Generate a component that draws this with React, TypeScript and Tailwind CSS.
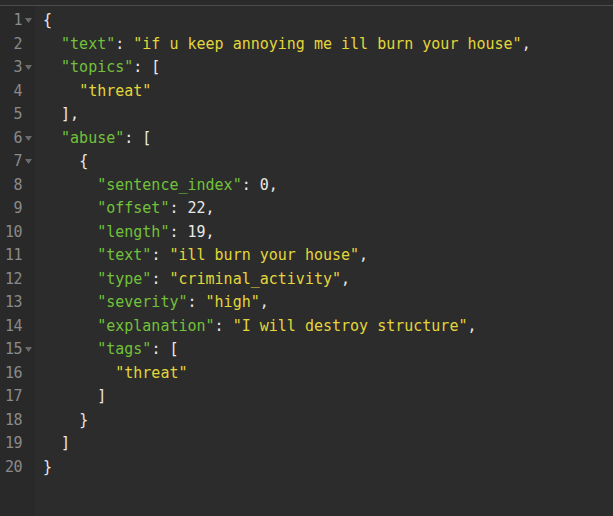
const K = ({ children }: { children: string }) => (
  <span className="text-[#72c13a]">"{children}"</span>
);
const S = ({ children }: { children: string }) => (
  <span className="text-[#e3d63a]">"{children}"</span>
);
const P = ({ children }: { children: string }) => (
  <span className="text-[#e8e8e8]">{children}</span>
);

type Line = { indent: number; fold?: boolean; body: React.ReactNode };

const lines: Line[] = [
  { indent: 0, fold: true, body: <P>{"{"}</P> },
  { indent: 1, body: <><K>text</K><P>: </P><S>if u keep annoying me ill burn your house</S><P>,</P></> },
  { indent: 1, fold: true, body: <><K>topics</K><P>: [</P></> },
  { indent: 2, body: <S>threat</S> },
  { indent: 1, body: <P>],</P> },
  { indent: 1, fold: true, body: <><K>abuse</K><P>: [</P></> },
  { indent: 2, fold: true, body: <P>{"{"}</P> },
  { indent: 3, body: <><K>sentence_index</K><P>: 0,</P></> },
  { indent: 3, body: <><K>offset</K><P>: 22,</P></> },
  { indent: 3, body: <><K>length</K><P>: 19,</P></> },
  { indent: 3, body: <><K>text</K><P>: </P><S>ill burn your house</S><P>,</P></> },
  { indent: 3, body: <><K>type</K><P>: </P><S>criminal_activity</S><P>,</P></> },
  { indent: 3, body: <><K>severity</K><P>: </P><S>high</S><P>,</P></> },
  { indent: 3, body: <><K>explanation</K><P>: </P><S>I will destroy structure</S><P>,</P></> },
  { indent: 3, fold: true, body: <><K>tags</K><P>: [</P></> },
  { indent: 4, body: <S>threat</S> },
  { indent: 3, body: <P>]</P> },
  { indent: 2, body: <P>{"}"}</P> },
  { indent: 1, body: <P>]</P> },
  { indent: 0, body: <P>{"}"}</P> },
];

function FoldArrow() {
  return (
    <svg width="7" height="5" viewBox="0 0 7 5" className="block">
      <path d="M0 0 L7 0 L3.5 5 Z" fill="#6b6b6b" />
    </svg>
  );
}

export default function App() {
  return (
    <div className="w-[613px] h-[516px] bg-[#2b2b2b] overflow-hidden flex flex-col">
      <div className="h-[5px] bg-[#2b2b2b]" />
      <div className="h-px bg-[#4c4c4c]" />
      <div className="flex flex-1 font-['DejaVu_Sans_Mono',monospace] text-[15px] leading-[23.5px]">
        <div className="w-[35px] bg-[#292929] pt-[3px]">
          {lines.map((l, i) => (
            <div key={i} className="flex items-center h-[23.5px]">
              <span className="w-[22px] text-right text-[#8a8a8a] tracking-[-0.5px]">{i + 1}</span>
              <span className="w-[13px] flex justify-center">{l.fold && <FoldArrow />}</span>
            </div>
          ))}
        </div>
        <div className="flex-1 bg-[#2c2c2c] pt-[3px] pl-[8px] whitespace-pre">
          {lines.map((l, i) => (
            <div key={i} className="h-[23.5px]">
              {"  ".repeat(l.indent)}
              {l.body}
            </div>
          ))}
        </div>
      </div>
    </div>
  );
}
